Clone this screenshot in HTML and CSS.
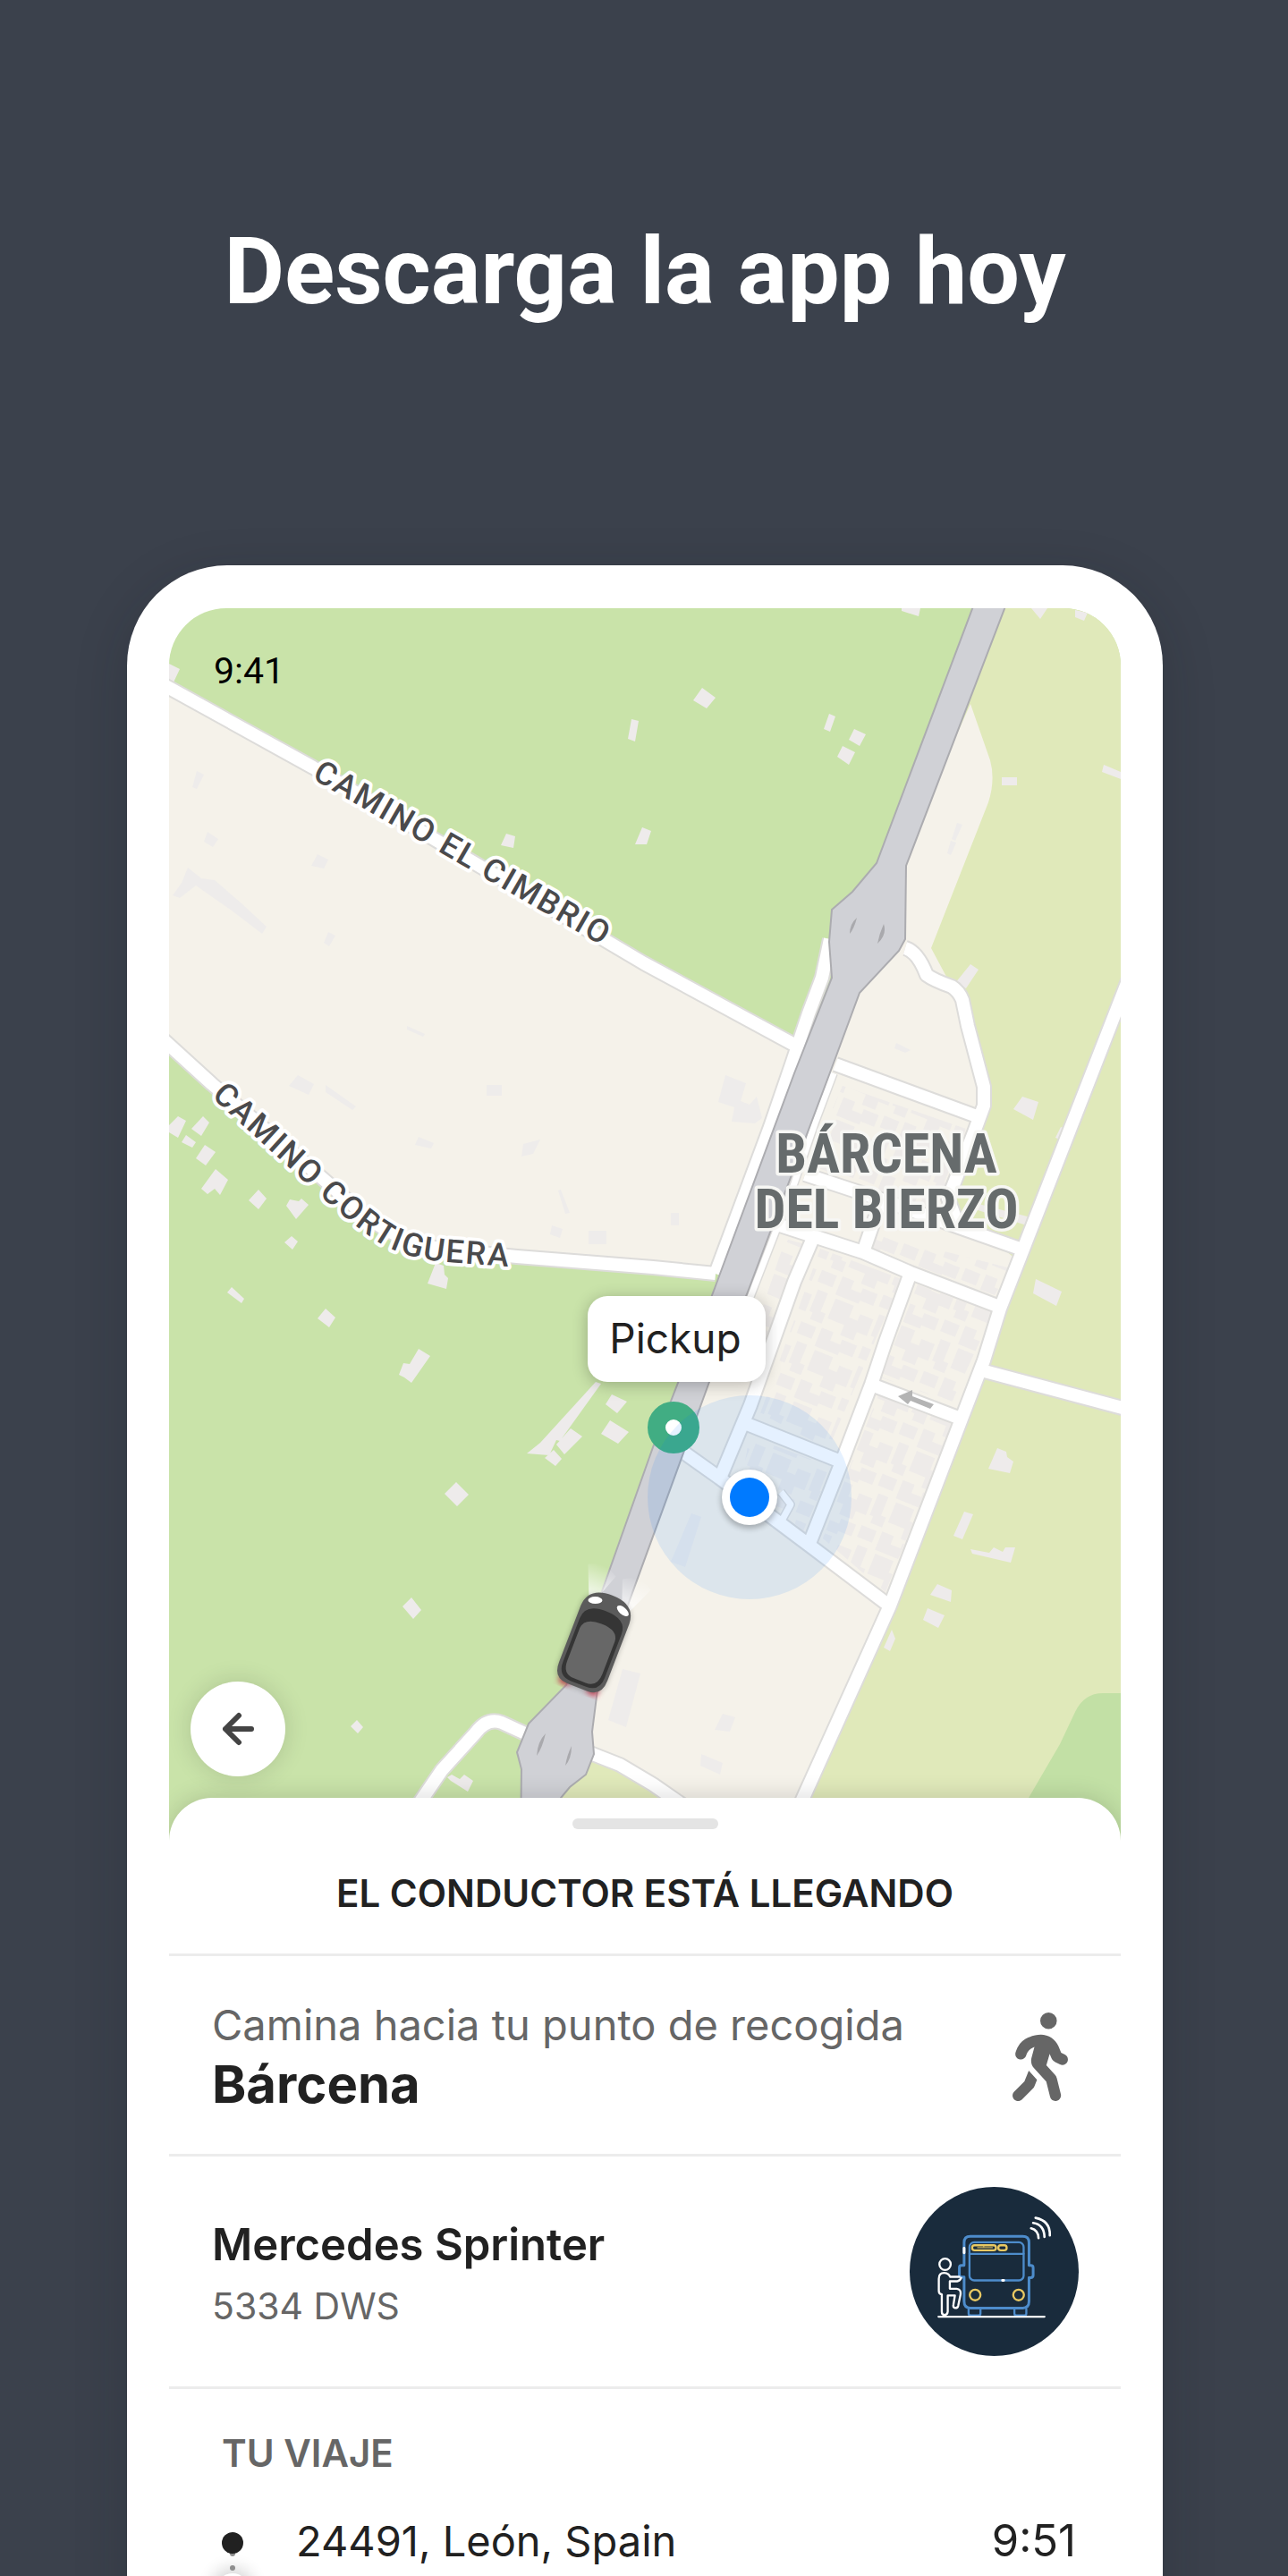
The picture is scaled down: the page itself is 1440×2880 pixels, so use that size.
FILE: index.html
```html
<!DOCTYPE html>
<html lang="es">
<head>
<meta charset="utf-8">
<title>Descarga la app hoy</title>
<meta name="viewport" content="width=device-width, initial-scale=1">
<link rel="stylesheet" href="styles.css">
</head>
<body>
<main class="page">
  <h1 class="headline">Descarga la app hoy</h1>

  <div class="phone">
    <div class="screen">
      <section class="map" aria-label="Mapa">
        <svg class="map-canvas" viewBox="189 680 1064 1380" aria-hidden="true">
          <defs>
            <pattern id="houses" width="74" height="62" patternUnits="userSpaceOnUse" patternTransform="rotate(22)">
              <path class="plot" d="M4 4h22v14h10v-8h16v20h-12v10h-16v-12H4zM56 2h12v22h6v12h-14v-8h-4zM2 40h14v10h12v-6h18v14H30v4H2zM52 42h18v14H52z"/>
            </pattern>
            <filter id="soft" x="-50%" y="-50%" width="200%" height="200%"><feGaussianBlur stdDeviation="9"/></filter>
            <filter id="glow" x="-50%" y="-50%" width="200%" height="200%"><feGaussianBlur stdDeviation="3"/></filter>
            <linearGradient id="beam" x1="0" y1="1" x2="0" y2="0">
              <stop offset="0" stop-color="#fff" stop-opacity=".85"/>
              <stop offset="1" stop-color="#fff" stop-opacity="0"/>
            </linearGradient>
            <path id="cimbrio" d="M348 870L700 1073"/>
            <path id="cortiguera" d="M236 1226L337 1318Q400 1376 432 1394Q462 1408 500 1411L620 1420"/>
          </defs>

          <!-- land -->
          <rect class="forest" x="189" y="680" width="1064" height="1380"/>
          <path class="town" d="M189 770L350 858L720 1077L888 1168L798 1423L730 1417L578 1405L497 1397Q450 1388 409 1360L360 1317L237 1212L189 1168Z"/>
          <path class="field" d="M1106 680H1253V2060H600L640 1970L740 1700Z"/>
          <path class="town" d="M1085 787L1107 850Q1113 872 1105 897L1041 1060L1064 1103L1082 1147L1101 1217L1099 1240L1060 1340L1072 1372L1143 1397L1105 1507L995 1795L898 2010H752L693 1973L662 1962L640 1880L900 1200Z"/>
          <path class="wood" d="M1150 2010L1185 1950L1202 1914Q1212 1893 1233 1893H1253V2060H1150Z"/>

          <!-- buildings in the countryside -->
          <g class="building">
            <path d="M189 742l12 6-8 17h-4zM706 804l8 2-4 23-8-3zM566 932l10 3-2 13-14-3zM718 925l10 4-5 15h-13zM785 769l15 11-10 12-15-9zM927 798l7 3-6 17-7-3zM955 815l13 6-7 13-12-7zM942 834l14 7-7 14-13-9zM1008 680h21l-2 9-19-6zM1153 680h18l-8 12zM1202 682l14 3-4 9-10-4zM1120 869h17v9h-17zM1234 855l19 8v8l-21-8z"/>
            <path d="M199 1248l9 5-9 19-10-6v-8zM227 1248l7 7-9 15-11-8zM208 1269l11 8-4 6-12-6zM229 1280l12 8-11 15-11-8zM241 1307l14 12-9 17-6-7-8 6-7-6zM289 1330l9 10-9 12-11-10zM324 1341l10 2 3-3 8 7-14 16-11-15zM326 1382l7 6-6 9-9-8zM259 1439l14 13-3 5-16-12zM364 1463l11 10-7 11-13-10zM487 1412l9 3 1 10 4 4-2 12-21-6z"/>
            <path d="M468 1508l13 8-21 30-8-6-6-3 5-13 7 1zM666 1545l6 2-46 64-4-1-8 17-25-2 15-12zM638 1597l13 9-20 20-9-11zM619 1621l9 10-7 8-12-9zM684 1559l17 8-11 13-13-10zM682 1588l21 13-12 13-19-11zM510 1657l14 14-13 13-14-14zM460 1786l11 14-9 10-12-14zM399 1923l7 8-6 7-8-8zM505 1984l9 5 5-5 10 7-6 12-19-12-4-4z"/>
            <path d="M1085 1078l9 6-14 21-12-6zM1143 1226l18 6-6 20-22-12zM1186 1260l6 2-4 13-8-3zM1158 1430l29 14-6 16-26-14zM1115 1619l10 4 1 6 7 5-4 13-24-5zM1078 1690l10 3-12 28-10-4zM1085 1732l21 4 5-6 10 5 3-5h11l-5 17-43-10zM1048 1771l16 7-1 13-23-8zM1037 1798l19 8-7 14-17-9zM997 1822l4 10-6 14-7-4z"/>
          </g>
          <!-- buildings in built-up land -->
          <g class="building faint">
            <path d="M220 862l8 4-8 16-5-2zM232 930l12 8-6 9-10-6zM355 955l12 6-5 10-14-3zM210 970l15 12 15 2 30 26 28 26-5 8-34-26-40-28-18 14-8-3 10-14zM367 1042l8 4-7 12-6-4zM333 1202l18 10-6 12-22-10zM364 1213l34 24-4 4-30-20zM544 1213h17v12h-17zM468 1271l17 7-3 6-18-4zM604 1274l-8 16-13 3 2-14zM627 1330l10 26-5 1-8-26zM617 1370l12 4-3 10-11-4zM658 1376h20v15h-20zM455 1147l20 9-2 3-18-8zM811 1202l23 9-6 20 10 4 8-9 6 24-8 6-26-2 3-16-18-6zM750 1356h9v14h-9z"/>
            <path d="M1002 1166l16 8-6 3-12-5zM1070 920l6 2-8 18-4-2zM1063 940l6 2-6 14-4-2zM696 1866l20 5-16 60-20-8zM773 1692l11 4-18 56-16-6zM808 1916l14 4-6 16-17-2zM784 1961l24 10-3 13-22-10z"/>
          </g>

          <!-- dense plots -->
          <g fill="url(#houses)">
            <path d="M942 1214L1080 1262L1048 1352L902 1305Z"/>
            <path d="M878 1385L903 1392L850 1530H830Z"/>
            <path d="M982 1380L1130 1418L1112 1448L1022 1414L968 1394Z"/>
            <path d="M917 1396L1008 1430L926 1620L850 1580Z"/>
            <path d="M1026 1436L1110 1468L1064 1568L985 1540Z"/>
            <path d="M982 1560L1064 1592L990 1780L920 1720L950 1640Z"/>
            <path d="M838 1606L930 1640L898 1712L830 1650Z"/>
          </g>
          <path class="field" d="M1094 1342L1156 1362L1136 1408L1080 1362Z"/>
          <path class="plot" d="M1090 1345L1164 1364 1144 1400 1134 1394 1148 1370 1090 1352Z"/>

          <!-- streets: a grey casing under a white line -->
          <g class="casing">
            <path id="s1" d="M180 764L350 858L720 1077L888 1168"/>
            <path id="s2" d="M180 1160L237 1212L360 1317L409 1360Q450 1390 497 1397L578 1405L730 1417L800 1424"/>
            <path id="s3" d="M928 1050L919 1093L904 1133L885 1190L861 1260L800 1424"/>
            <path id="s4" d="M1012 1060Q1026 1064 1036 1090Q1044 1096 1064 1103Q1072 1108 1076 1118L1082 1147L1100 1215V1236L1089 1266L1060 1340L1072 1372"/>
            <path id="s5" d="M934 1190L1092 1248"/>
            <path id="s6" d="M1262 1094L1145 1394L1118 1463L1100 1521L995 1795L898 2010L880 2050"/>
            <path id="s7" d="M900 1313L988 1342L1072 1372L1143 1397"/>
            <path id="s8" d="M869 1369L965 1400L1018 1423L1120 1462"/>
            <path id="s9" d="M984 1345L965 1400"/>
            <path id="s10" d="M909 1384L888 1433L839 1571L806 1650"/>
            <path id="s11" d="M1018 1423L990 1500L974 1548L942 1632L904 1728"/>
            <path id="s12" d="M974 1548L1074 1586"/>
            <path id="s13" d="M835 1592L940 1634"/>
            <path id="s14" d="M752 1615L804 1652L908 1730L994 1795"/>
            <path id="s15" d="M1097 1532L1262 1576"/>
            <path id="s16" d="M466 2020L494 1979L532 1937Q545 1920 561 1926L600 1944M655 1958L693 1973L730 1995L766 2020"/>
            <path class="lane" d="M932 1200L911 1256L888 1323L870 1370L839 1450"/>
            <path class="lane" d="M873 1668L884 1682L873 1702"/>
          </g>
          <g class="street">
            <use href="#s1"/><use href="#s2"/><use href="#s3"/><use href="#s4"/><use href="#s5"/><use href="#s6"/>
            <use href="#s7"/><use href="#s8"/><use href="#s9"/><use href="#s10"/><use href="#s11"/><use href="#s12"/>
            <use href="#s13"/><use href="#s14"/><use href="#s15"/><use href="#s16"/>
          </g>
          <g class="street thin"><path d="M932 1200L911 1256L888 1323L870 1370L839 1450"/><path d="M873 1668L884 1682L873 1702"/></g>

          <!-- motorway -->
          <path class="motorway" d="M1088 678L980 965L953 997L930 1017L927 1053L930 1093L888 1200L798 1443L730 1618L673 1779L633 1884L591 1927L578 1959L583 1978L582 2060H610L627 2010L637 1998L655 1984L664 1961L662 1936L668 1889L704 1789L793 1545L835 1447L934 1183L961 1110L1005 1063L1012 1050L1013 968L1124 678Z"/>
          <path class="island" d="M958 1026q-8 7-8 18 5-6 8-18zM988 1033q4 12-7 22 2-11 7-22zM610 1938q-9 9-10 25 6-8 10-25zM639 1952q0 14-7 22 2-12 7-22z"/>
          <path class="oneway" d="M1004 1561L1020 1554V1561L1044 1570 1040 1575 1018 1566 1015 1570Z"/>

          <!-- labels -->
          <text class="road-name"><textPath href="#cimbrio">CAMINO EL CIMBRIO</textPath></text>
          <text class="road-name"><textPath href="#cortiguera">CAMINO CORTIGUERA</textPath></text>
          <text class="place-name" text-anchor="middle"><tspan x="991" y="1311">BÁRCENA</tspan><tspan x="991" y="1373">DEL BIERZO</tspan></text>

          <!-- pickup marker and user location -->
          <circle class="stop-marker" cx="753" cy="1596" r="19"/>
          <circle class="accuracy" cx="838" cy="1674" r="114"/>
          <circle class="shade" cx="838" cy="1677" r="32" filter="url(#glow)"/>
          <circle cx="838" cy="1674" r="31" fill="#fff"/>
          <circle cx="838" cy="1674" r="22" fill="#007aff"/>

          <rect class="shade" x="657" y="1452" width="199" height="96" rx="22" filter="url(#soft)"/>
          <rect x="657" y="1449" width="199" height="96" rx="22" fill="#fff"/>
          <text class="pickup" x="755" y="1513" text-anchor="middle">Pickup</text>

          <!-- vehicle -->
          <g transform="translate(665 1835) rotate(21)">
            <path d="M-24-44L-38-78Q-22-88-4-76L-14-48ZM24-44L38-76Q22-88 4-76L14-48Z" fill="url(#beam)"/>
            <path d="M-22 50h12v7h-12zM12 50h12v7H12z" fill="#e0455a" filter="url(#glow)"/>
            <rect class="shade" x="-29" y="-50" width="58" height="106" rx="16" filter="url(#glow)"/>
            <path d="M-29-32Q-28-55 0-55T29-32V36Q29 55 12 55H-12Q-29 55-29 36Z" fill="#5b5b5b"/>
            <path d="M-25-18Q-25-36 0-36T25-18V34Q25 51 9 51H-9Q-25 51-25 34Z" fill="#353535"/>
            <path d="M-21-8Q-20-21 0-21T21-8V31Q21 47 7 47H-7Q-21 47-21 31Z" fill="#676767"/>
            <ellipse cx="-16" cy="-43" rx="8" ry="4" transform="rotate(-20 -16 -43)" fill="#fff"/>
            <ellipse cx="17" cy="-43" rx="8" ry="4" transform="rotate(20 17 -43)" fill="#fff"/>
          </g>
        </svg>

        <time class="clock">9:41</time>
        <button class="back" type="button" aria-label="Volver">
          <svg viewBox="0 0 40 40" width="40" height="40" aria-hidden="true"><path d="M21 5L6 20l15 15M6 20h29"/></svg>
        </button>
      </section>

      <section class="sheet">
        <header class="sheet-head">
          <span class="grip"></span>
          <h2 class="status">EL CONDUCTOR ESTÁ LLEGANDO</h2>
        </header>

        <div class="row">
          <div class="row-text">
            <p class="lead">Camina hacia tu punto de recogida</p>
            <p class="stop">Bárcena</p>
          </div>
          <svg class="walk" viewBox="0 0 320 512" width="62" height="99" aria-hidden="true">
            <path d="M160 48a48 48 0 1 1 96 0 48 48 0 1 1 -96 0zM126.500 199.300c-1 .4-1.900 .8-2.900 1.200l-8 3.500c-16.400 7.300-29 21.200-34.700 38.200l-2.600 7.800c-5.600 16.800-23.700 25.800-40.500 20.200s-25.800-23.700-20.200-40.500l2.600-7.800c11.400-34.100 36.600-61.900 69.400-76.500l8-3.500c20.800-9.200 43.300-14 66.100-14c44.600 0 84.800 26.800 101.900 67.900L281 232.700l21.400 10.700c15.800 7.900 22.200 27.100 14.300 42.900s-27.100 22.200-42.900 14.300L247 287.300c-10.300-5.200-18.400-13.800-22.800-24.500l-9.600-23-19.300 65.500 49.500 54c5.400 5.900 9.200 13 11.200 20.800l23 92.100c4.300 17.100-6.100 34.500-23.300 38.800s-34.500-6.100-38.800-23.300l-22-88.100-70.700-77.100c-14.800-16.100-20.300-38.600-14.700-59.700l16.900-63.500zM68.700 398l25-62.400c2.100 3 4.500 5.800 7 8.600l40.700 44.400-14.500 36.200c-2.400 6-6 11.500-10.600 16.100L54.600 502.600c-12.500 12.500-32.800 12.500-45.300 0s-12.500-32.800 0-45.300L68.700 398z"/>
          </svg>
        </div>

        <div class="row row-vehicle">
          <div class="row-text">
            <p class="vehicle">Mercedes Sprinter</p>
            <p class="plate">5334 DWS</p>
          </div>
          <svg class="avatar" viewBox="110 681 568 568" width="189" height="189" aria-hidden="true">
            <circle cx="394" cy="965" r="284" fill="#192b3c"/>
            <g fill="none" stroke-width="7" stroke-linecap="round" stroke-linejoin="round">
              <g stroke="#4d8ccb">
                <path stroke-width="9" d="M293 942V868Q293 847 314 847H490Q511 847 511 868V945H517Q525 945 525 953V978Q525 986 517 986H511V1066Q511 1088 490 1088H314Q293 1088 293 1066V984H284Q277 984 277 977V953Q277 945 284 945H293"/>
                <rect x="311" y="867" width="182" height="128" rx="16"/>
                <path d="M311 906H493M308 1092V1106Q308 1113 315 1113H341Q348 1113 348 1106V1092M462 1092V1106Q462 1113 469 1113H495Q502 1113 502 1106V1092"/>
              </g>
              <g stroke="#e9c963">
                <rect x="320" y="877" width="80" height="17" rx="8"/>
                <rect x="408" y="877" width="28" height="17" rx="8"/>
                <circle cx="330" cy="1044" r="18"/><circle cx="476" cy="1044" r="18"/>
                <path d="M338 885H388M359 876V883" stroke-width="3"/>
              </g>
              <g stroke="#fff">
                <circle cx="229" cy="941" r="19"/>
                <path d="M207 1117H563M283 987Q278 998 270 998H245V1023H268Q283 1024 281 1042L273 1081Q271 1088 263 1088Q255 1086 257 1077L262 1046H238V1100Q237 1111 227 1111Q218 1111 218 1100V1042Q208 1040 208 1030V990Q208 970 226 970Q240 970 246 983H277"/>
                <path d="M533 785Q583 795 581 844M525 802Q562 808 563 849M518 820Q542 826 543 853" stroke-width="8"/>
                <path d="M293 887V903M422 995H426" stroke-width="9"/>
              </g>
            </g>
          </svg>
        </div>

        <div class="trip">
          <h3 class="trip-title">TU VIAJE</h3>
          <ol class="legs">
            <li class="leg">
              <svg class="node" viewBox="0 0 24 60" width="24" height="60" aria-hidden="true">
                <ellipse cx="12" cy="58" rx="22" ry="18" fill="#000" opacity=".16" filter="url(#soft)"/>
                <circle cx="12" cy="24" r="3" fill="#8e8e8e"/><circle cx="12" cy="40" r="3" fill="#8e8e8e"/>
                <circle cx="12" cy="12" r="12" fill="#212121"/>
                <circle cx="12" cy="64" r="18" fill="#fff"/>
              </svg>
              <span class="place">24491, León, Spain</span>
              <time class="time">9:51</time>
            </li>
          </ol>
        </div>
      </section>
    </div>
  </div>
</main>
</body>
</html>
```
FILE: styles.css
```css
* { box-sizing: border-box; }

body {
  margin: 0;
  background: #3b414c;
  color: #212121;
  font-family: Inter, "Liberation Sans", sans-serif;
}

h1, h2, h3, p, ol { margin: 0; padding: 0; }

.page {
  height: 100vh;
  overflow: hidden;
  padding: 0 140px 0 142px;
}

.headline {
  padding: 244px 0 268px;
  color: #fff;
  font: 700 104px/120px Roboto, sans-serif;
  text-align: center;
  white-space: nowrap;
}

.phone {
  padding: 48px 47px 80px;
  background: #fff;
  border-radius: 112px;
  box-shadow: 0 16px 60px rgba(20, 24, 32, .2);
}

.screen {
  overflow: hidden;
  border-radius: 64px 64px 0 0;
}

/* map */
.map { position: relative; }
.map-canvas { display: block; width: 100%; height: auto; }

.forest { fill: #c9e3a9; }
.town { fill: #f5f2ea; }
.field { fill: #e0e9ba; }
.wood { fill: #c2e0a5; }
.building { fill: #eeebeb; }
.faint { fill: #eeeceb; }
.plot { fill: #eeebe9; }

.casing { fill: none; stroke: #dddcda; stroke-width: 18px; stroke-linejoin: round; }
.street { fill: none; stroke: #fff; stroke-width: 14px; stroke-linejoin: round; }
.casing .lane { stroke-width: 10px; }
.thin { stroke-width: 7px; }
.motorway { fill: #d0d1d6; stroke: #acacb0; stroke-width: 2px; }
.island { fill: #a9a9ad; }
.oneway { fill: #b4b4b4; }

.road-name {
  fill: #4a4a4c;
  stroke: #fff;
  stroke-width: 8px;
  stroke-linejoin: round;
  paint-order: stroke;
  font: 500 36px Roboto, sans-serif;
  letter-spacing: 2px;
}

.place-name {
  fill: #666b6c;
  stroke: #f7f7f4;
  stroke-width: 7px;
  stroke-linejoin: round;
  paint-order: stroke;
  font: 700 62px "Roboto Condensed", Roboto, sans-serif;
}

.stop-marker { fill: #fff; stroke: #41ad83; stroke-width: 20px; }
.accuracy { fill: #007aff; opacity: .1; }
.shade { fill: #000; opacity: .25; }
.pickup { fill: #212121; font: 400 46px Inter, sans-serif; }

.clock {
  position: absolute;
  top: 46px;
  left: 50px;
  color: #000;
  font: 400 41px/48px Roboto, sans-serif;
}

.back {
  position: absolute;
  left: 24px;
  bottom: 74px;
  display: grid;
  place-items: center;
  width: 106px;
  height: 106px;
  padding: 0;
  border: 0;
  border-radius: 50%;
  background: #fff;
  box-shadow: 0 0 28px rgba(0, 0, 0, .14);
}
.back path { fill: none; stroke: #444; stroke-width: 6px; stroke-linecap: round; stroke-linejoin: round; }

/* bottom sheet */
.sheet {
  position: relative;
  margin-top: -50px;
  background: #fff;
  border-radius: 48px 48px 0 0;
  box-shadow: 0 0 28px rgba(0, 0, 0, .16);
}

.sheet-head {
  display: flex;
  flex-direction: column;
  align-items: center;
  gap: 48px;
  padding: 23px 48px 43px;
}
.grip { width: 163px; height: 12px; border-radius: 6px; background: #e4e4e4; }
.status { font-size: 42px; line-height: 48px; font-weight: 600; }

.row {
  display: flex;
  align-items: center;
  justify-content: space-between;
  gap: 24px;
  height: 224px;
  padding: 0 47px 0 48px;
  border-top: 3px solid #ececec;
}
.row-vehicle { height: 260px; }

.lead { color: #666; font-size: 47px; line-height: 64px; }
.stop { font-size: 58px; line-height: 68px; font-weight: 700; }
.walk { margin: 4px 12px 0 0; fill: #666; }
.vehicle { padding-top: 4px; font-size: 49px; line-height: 72px; font-weight: 600; }
.plate { color: #666; font-size: 41px; line-height: 64px; }

.trip { padding: 48px 50px 48px 59px; border-top: 3px solid #ececec; }
.trip-title { color: #666; font-size: 42px; line-height: 48px; font-weight: 600; }
.legs { list-style: none; padding-top: 44px; }
.leg { display: flex; align-items: flex-start; gap: 59px; font-size: 47px; line-height: 60px; }
.node { overflow: visible; margin-top: 20px; }
.place { flex: 1; }
.time { font-size: 49px; }
```
